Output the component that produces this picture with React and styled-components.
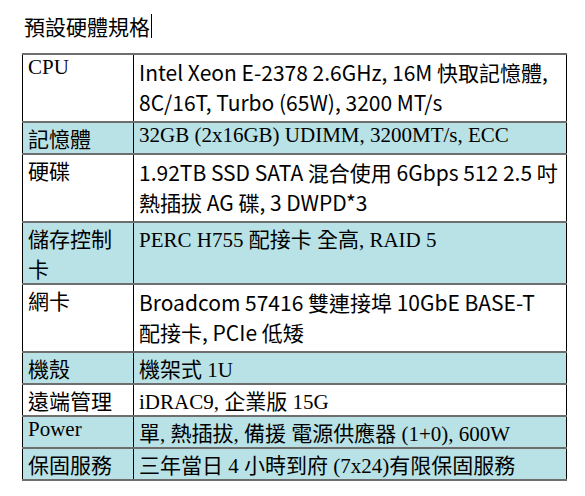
import styled, { createGlobalStyle } from 'styled-components';

const GlobalStyle = createGlobalStyle`
    body {
        margin: 0;
        background: #ffffff;
        color: #000000;
        font-family: "Liberation Serif", "Noto Sans CJK TC", serif;
    }
`;

const Page = styled.div`
    padding: 11px 18px 0 22px;
`;

const Title = styled.h1`
    margin: 0 0 12px 2px;
    font-family: "Noto Sans CJK TC", sans-serif;
    font-size: 21px;
    font-weight: normal;
    line-height: normal;
    display: flex;
    align-items: center;
`;

const Caret = styled.span`
    display: inline-block;
    width: 1px;
    height: 24px;
    margin-left: 1px;
    background: #000000;
`;

const Table = styled.table`
    width: 545px;
    border-collapse: collapse;
    font-size: 21px;
`;

const Row = styled.tr`
    background: ${(p) => (p.$blue ? '#b9e2e6' : '#ffffff')};
    border-top: 2px solid #6e6e6e;
    border-bottom: 2px solid #6e6e6e;
`;

const Label = styled.td`
    width: 100px;
    padding: 0 5px;
    vertical-align: top;
    border-left: 1px solid #000000;
    border-right: 1px solid #000000;
    font-family: "Liberation Serif", "Noto Sans CJK TC", serif;
    line-height: normal;
`;

const Value = styled.td`
    padding: ${(p) => (p.$sans ? '2px 5px 4px' : '0 5px')};
    vertical-align: top;
    border-right: 1px solid #000000;
    font-family: ${(p) =>
        p.$sans ? '"Noto Sans CJK TC", sans-serif' : '"Liberation Serif", "Noto Sans CJK TC", serif'};
    line-height: normal;
`;

const specs = [
    { label: 'CPU', lines: ['Intel Xeon E-2378 2.6GHz, 16M 快取記憶體,', '8C/16T, Turbo (65W), 3200 MT/s'], sans: true },
    { label: '記憶體', lines: ['32GB (2x16GB) UDIMM, 3200MT/s, ECC'], blue: true },
    { label: '硬碟', lines: ['1.92TB SSD SATA 混合使用 6Gbps 512 2.5 吋', '熱插拔 AG 碟, 3 DWPD*3'], sans: true },
    { label: '儲存控制卡', lines: ['PERC H755 配接卡 全高, RAID 5'], blue: true },
    { label: '網卡', lines: ['Broadcom 57416 雙連接埠 10GbE BASE-T', '配接卡, PCIe 低矮'], sans: true },
    { label: '機殼', lines: ['機架式 1U'], blue: true },
    { label: '遠端管理', lines: ['iDRAC9, 企業版 15G'] },
    { label: 'Power', lines: ['單, 熱插拔, 備援 電源供應器 (1+0), 600W'], blue: true },
    { label: '保固服務', lines: ['三年當日 4 小時到府 (7x24)有限保固服務'], blue: true },
];

export default function App() {
    return (
        <Page>
            <GlobalStyle />
            <Title>
                預設硬體規格
                <Caret />
            </Title>
            <Table>
                <tbody>
                    {specs.map((s) => (
                        <Row key={s.label} $blue={s.blue}>
                            <Label>{s.label}</Label>
                            <Value $sans={s.sans}>
                                {s.lines.map((line, i) => (
                                    <span key={i}>
                                        {i > 0 && <br />}
                                        {line}
                                    </span>
                                ))}
                            </Value>
                        </Row>
                    ))}
                </tbody>
            </Table>
        </Page>
    );
}
